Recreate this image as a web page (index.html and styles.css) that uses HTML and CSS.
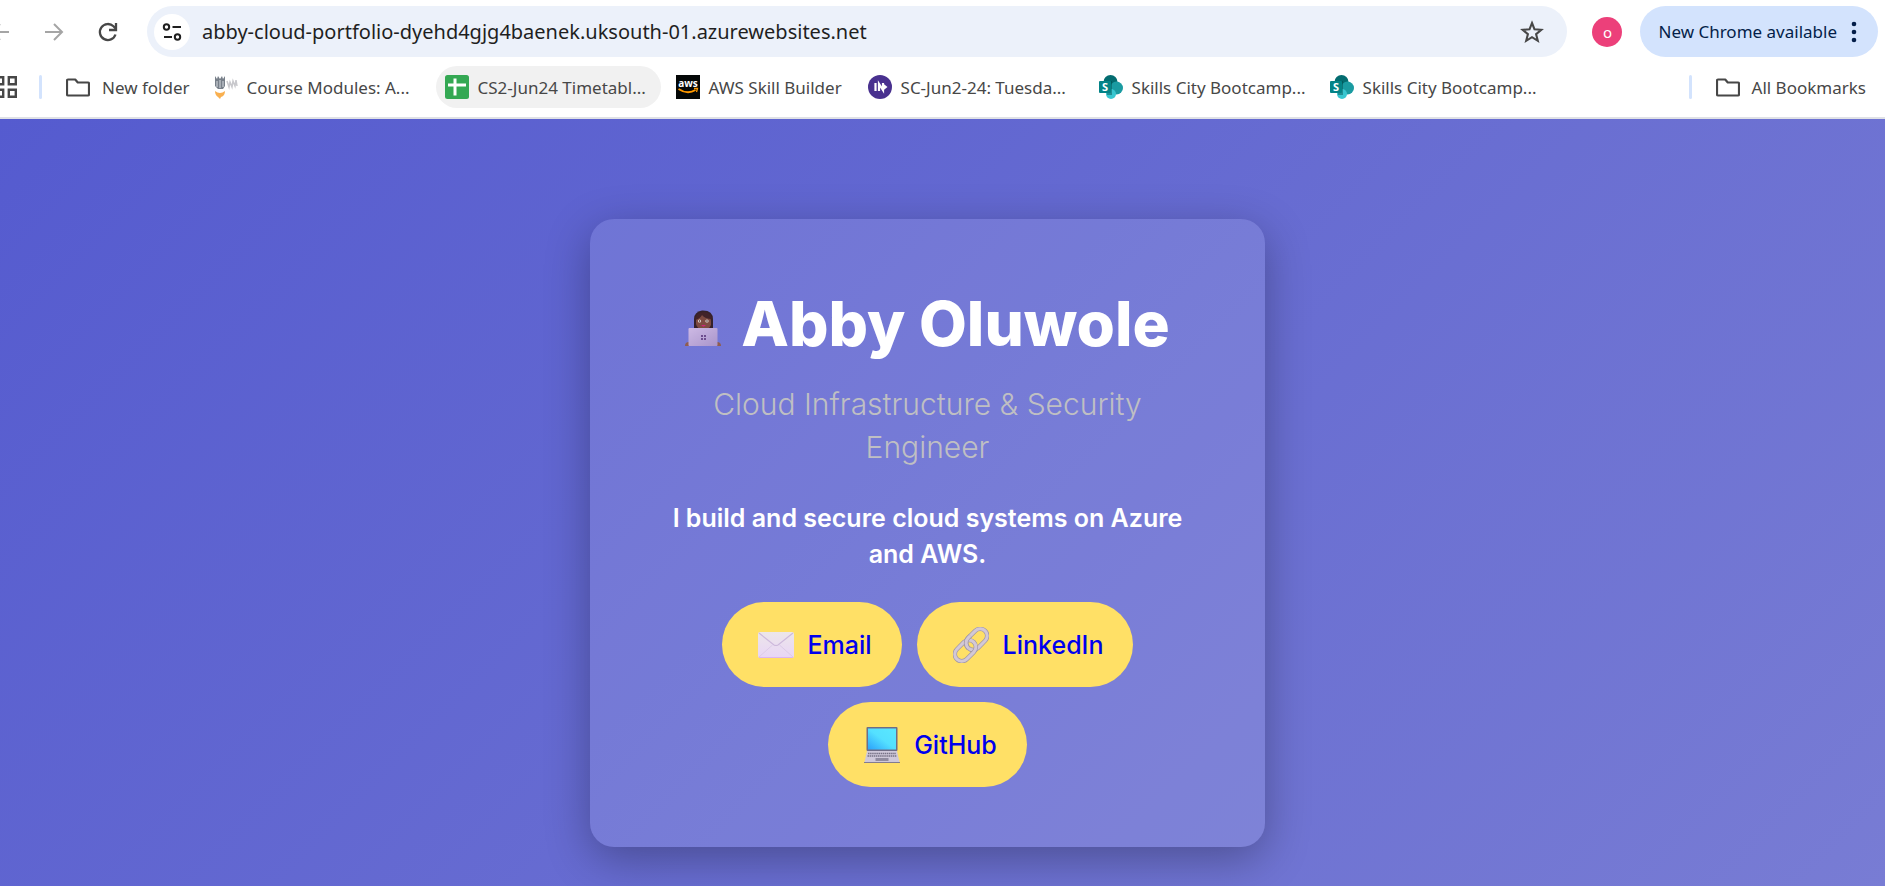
FILE: index.html
```html
<!DOCTYPE html>
<html lang="en">
<head>
<meta charset="utf-8">
<title>Abby Oluwole</title>
<link rel="stylesheet" href="styles.css">
</head>
<body>
<svg class="defs" aria-hidden="true">
  <defs>
    <linearGradient id="lid" x1="0" y1="0" x2="1" y2="1"><stop offset="0" stop-color="#cdb9e4"/><stop offset="1" stop-color="#a995cb"/></linearGradient>
    <linearGradient id="paper" x1="0" y1="0" x2="0" y2="1"><stop offset="0" stop-color="#ece6ea"/><stop offset="1" stop-color="#e8d5f6"/></linearGradient>
    <linearGradient id="screen" x1="0" y1="1" x2="1" y2="0"><stop offset="0" stop-color="#2aa2fb"/><stop offset=".5" stop-color="#54e0ff"/><stop offset="1" stop-color="#5ae8ff"/></linearGradient>
    <symbol id="folder" viewBox="0 0 24 24"><path d="M2 4.500h7.200l2.600 3H22a1 1 0 0 1 1 1v11a1 1 0 0 1-1 1H2a1 1 0 0 1-1-1v-14a1 1 0 0 1 1-1z" fill="none" stroke="#474747" stroke-width="2.200" stroke-linejoin="round"/></symbol>
    <symbol id="sharepoint" viewBox="0 0 24 24">
      <circle cx="11.500" cy="7" r="7" fill="#036c70"/><circle cx="17.500" cy="13" r="6.500" fill="#1a9ba1"/><circle cx="12" cy="19" r="5" fill="#37c6d0"/>
      <path d="M6 6h7v14H8z" fill="#02494b" opacity=".45"/><rect y="6" width="12" height="12" rx="1" fill="#038387"/>
      <text x="6" y="16" text-anchor="middle" class="mark-s">S</text>
    </symbol>
  </defs>
</svg>

<header class="browser">
  <div class="toolbar">
    <nav class="nav">
      <button class="icon-btn" aria-label="Back"><svg width="24" height="24" viewBox="0 0 24 24"><path d="M21 12H4M12 4l-8 8 8 8" fill="none" stroke="#a5a5a5" stroke-width="2"/></svg></button>
      <button class="icon-btn" aria-label="Forward"><svg width="24" height="24" viewBox="0 0 24 24"><path d="M3 12h17M12 4l8 8-8 8" fill="none" stroke="#a5a5a5" stroke-width="2"/></svg></button>
      <button class="icon-btn" aria-label="Reload"><svg width="24" height="24" viewBox="0 0 24 24"><path d="M19.500 14.500a8 8 0 1 1-2-8.200L20 9" fill="none" stroke="#474747" stroke-width="2.300"/><path d="M20 3v7h-7" fill="none" stroke="#474747" stroke-width="2.300"/></svg></button>
    </nav>
    <div class="omnibox">
      <button class="site-info" aria-label="Site information"><svg width="20" height="20" viewBox="0 0 20 20"><g fill="none" stroke="#1f1f1f" stroke-width="2"><circle cx="4.500" cy="5" r="2.700"/><path d="M10.500 5H19M2 15h8"/><circle cx="15.500" cy="15" r="2.700"/></g></svg></button>
      <input class="url" type="text" aria-label="Address" value="abby-cloud-portfolio-dyehd4gjg4baenek.uksouth-01.azurewebsites.net">
      <button class="star" aria-label="Bookmark this page"><svg width="24" height="24" viewBox="0 0 24 24"><path d="M12 3l2.500 6.300 6.800.5-5.200 4.400 1.700 6.600-5.800-3.600-5.800 3.600 1.700-6.600L2.700 9.800l6.800-.5z" fill="none" stroke="#474747" stroke-width="2.100"/></svg></button>
    </div>
    <button class="avatar" aria-label="Profile">o</button>
    <button class="update">New Chrome available
      <svg width="6" height="24" viewBox="0 0 6 24" fill="#041e49"><circle cx="3" cy="4" r="2.300"/><circle cx="3" cy="12" r="2.300"/><circle cx="3" cy="20" r="2.300"/></svg>
    </button>
  </div>

  <nav class="bookmarks" aria-label="Bookmarks">
    <button class="apps" aria-label="Apps"><svg width="24" height="24" viewBox="0 0 24 24" fill="none" stroke="#474747" stroke-width="2.400"><path d="M2.200 2.200h7v7h-7zM14.800 2.200h7v7h-7zM2.200 14.800h7v7h-7zM14.800 14.800h7v7h-7z"/></svg></button>
    <span class="divider"></span>
    <button class="bookmark folder"><svg width="24" height="24"><use href="#folder"/></svg>New folder</button>
    <a class="bookmark" href="#"><svg width="24" height="24" viewBox="0 0 24 24"><path d="M1 1l2 3 1-3 2 3 2-3 1 3 2-3v10l-2 3H4l-3-3z" fill="#777f89"/><path d="M3 6v6M6 5v8M9 6v6" stroke="#d9dde2" stroke-width="1"/><path d="M13 6l2 6 1-5 2 5 1-6 2 5 1-6 1 6" fill="none" stroke="#c9c9cd" stroke-width="1.500"/><path d="M1 16q5 4 10 0 0 5-4 6l-1 2-2-2q-3-2-3-6z" fill="#f9b050"/></svg><span class="cut">Course Modules: A...</span></a>
    <a class="bookmark active" href="#"><svg width="24" height="24" viewBox="0 0 24 24"><rect width="24" height="24" rx="2.500" fill="#34a853"/><path d="M10 3.500v17M3 10h18" stroke="#fff" stroke-width="3"/></svg><span class="cut">CS2-Jun24 Timetabl...</span></a>
    <a class="bookmark" href="#"><svg width="24" height="24" viewBox="0 0 24 24"><rect width="24" height="24" fill="#040707"/><text x="12" y="12" text-anchor="middle" class="mark-aws">aws</text><path d="M2.500 14q9 6 17 1" fill="none" stroke="#f90" stroke-width="1.800"/><path d="M18 13.500h3.500L20.500 17" fill="none" stroke="#f90" stroke-width="1.300"/></svg><span class="short">AWS Skill Builder</span></a>
    <a class="bookmark" href="#"><svg width="24" height="24" viewBox="0 0 24 24"><circle cx="12" cy="12" r="12" fill="#49318f"/><path d="M7.500 8v8M11 16V9l4 6V8" fill="none" stroke="#fff" stroke-width="2.200"/><path d="M14.500 8l5 4-5 4z" fill="#fff"/></svg><span class="cut">SC-Jun2-24: Tuesda...</span></a>
    <a class="bookmark" href="#"><svg width="24" height="24"><use href="#sharepoint"/></svg><span class="cut">Skills City Bootcamp...</span></a>
    <a class="bookmark" href="#"><svg width="24" height="24"><use href="#sharepoint"/></svg><span class="cut">Skills City Bootcamp...</span></a>
    <span class="divider push"></span>
    <button class="bookmark folder">
      <svg width="24" height="24"><use href="#folder"/></svg>All Bookmarks</button>
  </nav>
</header>

<main class="page">
  <section class="card">
    <h1 class="name">
      <svg width="36" height="36" viewBox="0 0 36 36"><path d="M9 18V9q0-7 8-8.500 11-.5 11 9V18z" fill="#35222a"/><path d="M11 10q0-5 7-5 8 0 8 6v4q-2 5-8 5-6-1-7-6z" fill="#7d4a41"/><path d="M10 10q5-1 7-5 3 4 10 4-1-7-8-7-8 0-9 8z" fill="#412329"/><circle cx="14.500" cy="11" r="1.600" fill="#f0e8df"/><circle cx="22" cy="11" r="1.600" fill="#f0e8df"/><circle cx="14.500" cy="11" r=".8" fill="#3a2020"/><circle cx="22" cy="11" r=".8" fill="#3a2020"/><path d="M16 15h5l-2 1.500h-1z" fill="#d0257b"/><path d="M0 36q0-4 4-4v4zM36 36q0-4-4-4v4z" fill="#8f5d4f"/><rect x="3.500" y="18" width="29" height="18" rx="1" fill="url(#lid)"/><path d="M16 25h2v2h-2zM19 25h2v2h-2zM16 28h2v2h-2zM19 28h2v2h-2z" fill="#6d4d8e"/></svg>
      <span>Abby Oluwole</span>
    </h1>
    <p class="role">Cloud Infrastructure &amp; Security Engineer</p>
    <p class="tagline">I build and secure cloud systems on Azure and AWS.</p>
    <div class="links">
      <a class="pill" href="#"><svg width="36" height="36" viewBox="0 0 36 36"><rect y="5" width="36" height="26" rx="2" fill="url(#paper)"/><path d="M1 30l13.500-12M35 30L21.500 18" stroke="#dccbe8" stroke-width="1"/><path d="M1 6l15 12q2 1 4 0L35 6" fill="none" stroke="#cdb9dc" stroke-width="1.200"/><path d="M1 30.500h34" stroke="#dcb4f2" stroke-width="1"/></svg>Email</a>
      <a class="pill" href="#"><svg width="36" height="36" viewBox="0 0 36 36" fill="none"><g transform="rotate(-45 18 18)"><rect x="14" y="11" width="24" height="14" rx="7" stroke="#a197a8" stroke-width="4.400"/><rect x="14" y="11" width="24" height="14" rx="7" stroke="#d3c8d6" stroke-width="3"/><rect x="-2" y="11" width="24" height="14" rx="7" stroke="#a197a8" stroke-width="4.400"/><rect x="-2" y="11" width="24" height="14" rx="7" stroke="#d3c8d6" stroke-width="3"/><path d="M14 19a7 7 0 0 1 7-8h3" stroke="#a197a8" stroke-width="4.400"/><path d="M14 19a7 7 0 0 1 7-8h3" stroke="#d3c8d6" stroke-width="3"/></g></svg>LinkedIn</a>
      <a class="pill" href="#"><svg width="36" height="36" viewBox="0 0 36 36"><rect x="2.500" width="31" height="24" rx="1" fill="#6f6d86"/><rect x="4" y="1.500" width="28" height="21" fill="url(#screen)"/><path d="M3 24h30l2.500 11h-35z" fill="#cfc8da"/><path d="M4 26.500h28M3.500 29h29" stroke="#777286" stroke-width="1.600" stroke-dasharray="1.500 .6"/><rect x="11.500" y="31" width="13" height="3" fill="#908b9f"/><path d="M0 35.500h36" stroke="#827c90" stroke-width="1"/></svg>GitHub</a>
    </div>
  </section>
</main>
</body>
</html>
```
FILE: styles.css
```css
* { box-sizing: border-box; }

body {
  margin: 0;
  min-height: 100vh;
  display: flex;
  flex-direction: column;
  overflow-x: hidden;
  font-family: Inter, "Open Sans", sans-serif;
}

button { border: 0; padding: 0; background: none; font: inherit; color: inherit; }
a { text-decoration: none; }
svg { flex: none; display: block; }
.defs { position: absolute; width: 0; height: 0; }

/* Browser toolbar */
.browser {
  background: #fff;
  border-bottom: 2px solid #dfe1e6;
  padding: 6px 7px 9px 0;
  font-family: "Noto Sans", sans-serif;
  color: #474747;
}
.toolbar { display: flex; align-items: center; }
.nav { display: flex; gap: 30px; margin-left: -12px; margin-right: 27px; }
.icon-btn { display: block; }
.omnibox {
  flex: 1;
  height: 51px;
  display: flex;
  align-items: center;
  padding: 0 23px 0 7px;
  border-radius: 26px;
  background: #ecf1fa;
}
.site-info {
  width: 36px;
  height: 36px;
  display: grid;
  place-items: center;
  border-radius: 50%;
  background: #fff;
}
.url {
  flex: 1;
  border: 0;
  padding: 0;
  margin-left: 12px;
  background: none;
  color: #1f1f1f;
  font: 20px "Noto Sans", sans-serif;
  outline: none;
}
.avatar {
  width: 30px;
  height: 30px;
  margin: 0 18px 0 25px;
  border-radius: 50%;
  background: #ec407a;
  color: #fff;
  font-size: 15px;
  line-height: 28px;
}
.update {
  height: 51px;
  display: flex;
  align-items: center;
  gap: 14px;
  padding: 0 21px 0 18px;
  border-radius: 26px;
  background: #d3e3fd;
  color: #041e49;
  font-size: 17px;
}

/* Bookmarks bar */
.bookmarks {
  display: flex;
  align-items: center;
  gap: 6px;
  margin-top: 9px;
  padding-right: 3px;
  font-size: 17px;
}
.apps { margin-left: -6px; }
.divider { width: 3px; height: 24px; margin: 0 9px 0 15px; border-radius: 2px; background: #d3e3fd; }
.push { margin-left: auto; }
.bookmark {
  height: 42px;
  display: flex;
  align-items: center;
  gap: 9px;
  padding: 0 9px;
  border-radius: 21px;
  color: #474747;
  white-space: nowrap;
}
.folder { gap: 12px; }
.active { background: #f1f1f1; }
.cut { width: 174px; }
.short { min-width: 135px; }
.mark-s { font: bold 11px "Open Sans", sans-serif; fill: #fff; }
.mark-aws { font: bold 10px "Open Sans", sans-serif; fill: #fff; }

/* Portfolio page */
.page {
  flex: 1;
  display: flex;
  justify-content: center;
  align-items: flex-start;
  padding: 100px 30px 38px 0;
  background: linear-gradient(135deg, #555bcf, #787cd4);
}
.card {
  width: 675px;
  padding: 60px 75px;
  border-radius: 24px;
  background: rgba(255, 255, 255, 0.11);
  box-shadow: 0 12px 45px rgba(0, 0, 0, 0.3);
  color: #fff;
  text-align: center;
}
.name {
  display: flex;
  justify-content: center;
  align-items: baseline;
  gap: 20px;
  margin: 0;
  font-size: 62px;
  font-weight: 800;
  line-height: 90px;
}
.role {
  margin: 14px 0 31px;
  color: #bfbfc3;
  font-size: 30px;
  font-weight: 300;
  line-height: 43px;
}
.tagline {
  margin: 0 0 30px;
  font-size: 25px;
  font-weight: 600;
  line-height: 36px;
}
.links { display: flex; flex-wrap: wrap; justify-content: center; gap: 15px; }
.pill {
  height: 85px;
  display: flex;
  align-items: center;
  gap: 14px;
  padding: 0 30px 0 36px;
  border-radius: 43px;
  background: #ffe066;
  color: #00e;
  font-size: 25px;
  font-weight: 500;
}
```
